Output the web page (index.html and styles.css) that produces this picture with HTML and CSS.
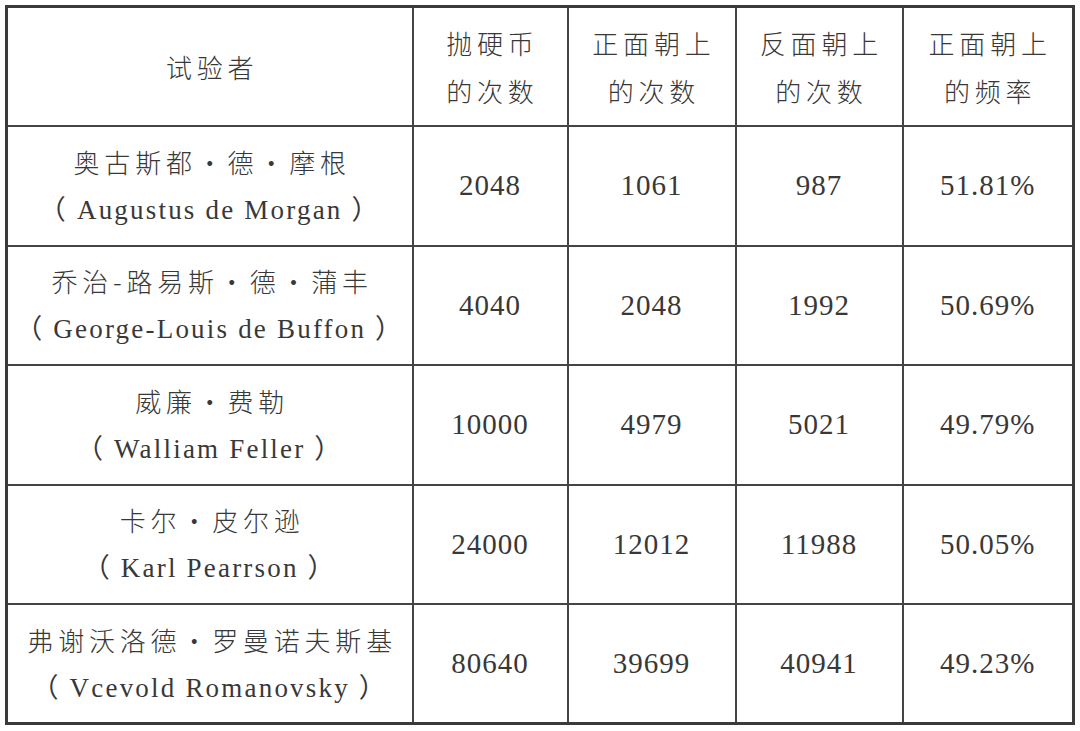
FILE: index.html
```html
<!DOCTYPE html>
<html lang="zh-CN">
<head>
<meta charset="utf-8">
<title>抛硬币试验</title>
<link rel="stylesheet" href="styles.css">
</head>
<body>
<table class="coin-table">
  <colgroup>
    <col class="c-name">
    <col class="c-total">
    <col class="c-heads">
    <col class="c-tails">
    <col class="c-freq">
  </colgroup>
  <thead>
    <tr>
      <th><span class="zh">试验者</span></th>
      <th><span class="zh">抛硬币</span><span class="zh">的次数</span></th>
      <th><span class="zh">正面朝上</span><span class="zh">的次数</span></th>
      <th><span class="zh">反面朝上</span><span class="zh">的次数</span></th>
      <th><span class="zh">正面朝上</span><span class="zh">的频率</span></th>
    </tr>
  </thead>
  <tbody>
    <tr>
      <td><span class="zh">奥古斯都・德・摩根</span><span class="en">（ Augustus de Morgan ）</span></td>
      <td class="num">2048</td>
      <td class="num">1061</td>
      <td class="num">987</td>
      <td class="num">51.81%</td>
    </tr>
    <tr>
      <td><span class="zh">乔治-路易斯・德・蒲丰</span><span class="en">（ George-Louis de Buffon ）</span></td>
      <td class="num">4040</td>
      <td class="num">2048</td>
      <td class="num">1992</td>
      <td class="num">50.69%</td>
    </tr>
    <tr>
      <td><span class="zh">威廉・费勒</span><span class="en">（ Walliam Feller ）</span></td>
      <td class="num">10000</td>
      <td class="num">4979</td>
      <td class="num">5021</td>
      <td class="num">49.79%</td>
    </tr>
    <tr>
      <td><span class="zh">卡尔・皮尔逊</span><span class="en">（ Karl Pearrson ）</span></td>
      <td class="num">24000</td>
      <td class="num">12012</td>
      <td class="num">11988</td>
      <td class="num">50.05%</td>
    </tr>
    <tr>
      <td><span class="zh">弗谢沃洛德・罗曼诺夫斯基</span><span class="en">（ Vcevold Romanovsky ）</span></td>
      <td class="num">80640</td>
      <td class="num">39699</td>
      <td class="num">40941</td>
      <td class="num">49.23%</td>
    </tr>
  </tbody>
</table>
</body>
</html>
```
FILE: styles.css
```css
html, body {
  margin: 0;
  padding: 0;
  background: #ffffff;
}
body {
  padding: 5px 5px;
  font-family: "Liberation Serif", "Noto Sans CJK SC", serif;
  color: #383838;
}
.coin-table {
  border-collapse: collapse;
  table-layout: fixed;
  width: 1067px;
  border: 3px solid #3a3a3a;
}
.c-name { width: 406px; }
.c-total { width: 155px; }
.c-heads { width: 168px; }
.c-tails { width: 167px; }
.c-freq { width: 171px; }
.coin-table th,
.coin-table td {
  border: 2px solid #444444;
  text-align: center;
  vertical-align: middle;
  padding: 0;
  font-weight: normal;
}
.coin-table tr {
  height: 119.5px;
}
.zh {
  display: block;
  font-family: "Noto Sans CJK SC", sans-serif;
  font-size: 26px;
  font-weight: 300;
  letter-spacing: 4.8px;
  line-height: 48px;
  white-space: nowrap;
  margin-right: -4.8px;
}
.en {
  display: block;
  font-family: "Liberation Serif", "Noto Sans CJK SC", serif;
  font-size: 27px;
  letter-spacing: 2.2px;
  line-height: 48px;
  white-space: nowrap;
}
.num {
  font-size: 29px;
  letter-spacing: 1px;
}
```
